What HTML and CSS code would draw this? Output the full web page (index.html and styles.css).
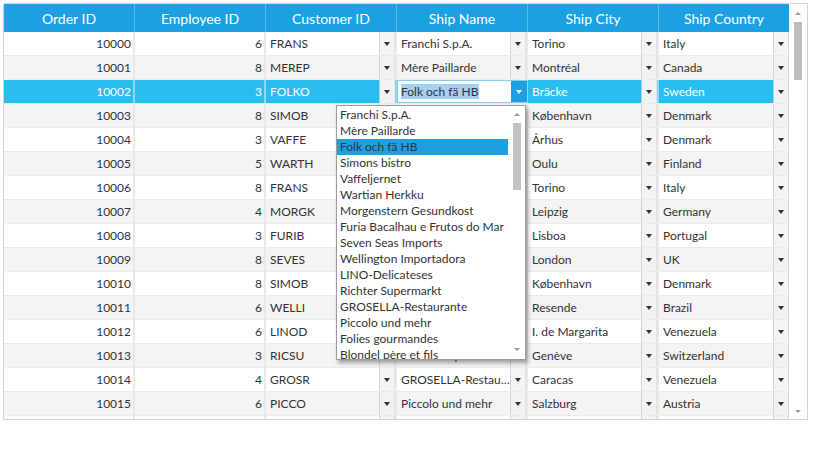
FILE: index.html
```html
<!DOCTYPE html>
<html>
<head>
<meta charset="utf-8">
<link rel="stylesheet" href="styles.css">
</head>
<body>
<div class="grid">
  <div class="main">
    <div class="header">
      <div class="hcell">Order ID</div>
      <div class="hcell">Employee ID</div>
      <div class="hcell">Customer ID</div>
      <div class="hcell">Ship Name</div>
      <div class="hcell">Ship City</div>
      <div class="hcell last">Ship Country</div>
    </div>
    <div class="body">
      <div class="row"><div class="cell num">10000</div><div class="cell num">6</div><div class="cell combo"><span class="txt">FRANS</span><span class="btn"></span></div><div class="cell combo"><span class="txt">Franchi S.p.A.</span><span class="btn"></span></div><div class="cell combo"><span class="txt">Torino</span><span class="btn"></span></div><div class="cell combo last"><span class="txt">Italy</span><span class="btn"></span></div></div>
      <div class="row alt"><div class="cell num">10001</div><div class="cell num">8</div><div class="cell combo"><span class="txt">MEREP</span><span class="btn"></span></div><div class="cell combo"><span class="txt">Mère Paillarde</span><span class="btn"></span></div><div class="cell combo"><span class="txt">Montréal</span><span class="btn"></span></div><div class="cell combo last"><span class="txt">Canada</span><span class="btn"></span></div></div>
      <div class="row sel"><div class="cell num">10002</div><div class="cell num">3</div><div class="cell combo"><span class="txt">FOLKO</span><span class="btn"></span></div><div class="cell combo editing"><span class="txt"><span class="hl">Folk och fä HB</span></span><span class="btn active"></span></div><div class="cell combo"><span class="txt">Bräcke</span><span class="btn"></span></div><div class="cell combo last"><span class="txt">Sweden</span><span class="btn"></span></div></div>
      <div class="row alt"><div class="cell num">10003</div><div class="cell num">8</div><div class="cell combo"><span class="txt">SIMOB</span><span class="btn"></span></div><div class="cell combo"><span class="txt">Simons bistro</span><span class="btn"></span></div><div class="cell combo"><span class="txt">København</span><span class="btn"></span></div><div class="cell combo last"><span class="txt">Denmark</span><span class="btn"></span></div></div>
      <div class="row"><div class="cell num">10004</div><div class="cell num">3</div><div class="cell combo"><span class="txt">VAFFE</span><span class="btn"></span></div><div class="cell combo"><span class="txt">Vaffeljernet</span><span class="btn"></span></div><div class="cell combo"><span class="txt">Århus</span><span class="btn"></span></div><div class="cell combo last"><span class="txt">Denmark</span><span class="btn"></span></div></div>
      <div class="row alt"><div class="cell num">10005</div><div class="cell num">5</div><div class="cell combo"><span class="txt">WARTH</span><span class="btn"></span></div><div class="cell combo"><span class="txt">Wartian Herkku</span><span class="btn"></span></div><div class="cell combo"><span class="txt">Oulu</span><span class="btn"></span></div><div class="cell combo last"><span class="txt">Finland</span><span class="btn"></span></div></div>
      <div class="row"><div class="cell num">10006</div><div class="cell num">8</div><div class="cell combo"><span class="txt">FRANS</span><span class="btn"></span></div><div class="cell combo"><span class="txt">Franchi S.p.A.</span><span class="btn"></span></div><div class="cell combo"><span class="txt">Torino</span><span class="btn"></span></div><div class="cell combo last"><span class="txt">Italy</span><span class="btn"></span></div></div>
      <div class="row alt"><div class="cell num">10007</div><div class="cell num">4</div><div class="cell combo"><span class="txt">MORGK</span><span class="btn"></span></div><div class="cell combo"><span class="txt">Morgenstern Gesundkost</span><span class="btn"></span></div><div class="cell combo"><span class="txt">Leipzig</span><span class="btn"></span></div><div class="cell combo last"><span class="txt">Germany</span><span class="btn"></span></div></div>
      <div class="row"><div class="cell num">10008</div><div class="cell num">3</div><div class="cell combo"><span class="txt">FURIB</span><span class="btn"></span></div><div class="cell combo"><span class="txt">Furia Bacalhau e Frutos do Mar</span><span class="btn"></span></div><div class="cell combo"><span class="txt">Lisboa</span><span class="btn"></span></div><div class="cell combo last"><span class="txt">Portugal</span><span class="btn"></span></div></div>
      <div class="row alt"><div class="cell num">10009</div><div class="cell num">8</div><div class="cell combo"><span class="txt">SEVES</span><span class="btn"></span></div><div class="cell combo"><span class="txt">Seven Seas Imports</span><span class="btn"></span></div><div class="cell combo"><span class="txt">London</span><span class="btn"></span></div><div class="cell combo last"><span class="txt">UK</span><span class="btn"></span></div></div>
      <div class="row"><div class="cell num">10010</div><div class="cell num">8</div><div class="cell combo"><span class="txt">SIMOB</span><span class="btn"></span></div><div class="cell combo"><span class="txt">Simons bistro</span><span class="btn"></span></div><div class="cell combo"><span class="txt">København</span><span class="btn"></span></div><div class="cell combo last"><span class="txt">Denmark</span><span class="btn"></span></div></div>
      <div class="row alt"><div class="cell num">10011</div><div class="cell num">6</div><div class="cell combo"><span class="txt">WELLI</span><span class="btn"></span></div><div class="cell combo"><span class="txt">Wellington Importadora</span><span class="btn"></span></div><div class="cell combo"><span class="txt">Resende</span><span class="btn"></span></div><div class="cell combo last"><span class="txt">Brazil</span><span class="btn"></span></div></div>
      <div class="row"><div class="cell num">10012</div><div class="cell num">6</div><div class="cell combo"><span class="txt">LINOD</span><span class="btn"></span></div><div class="cell combo"><span class="txt">LINO-Delicateses</span><span class="btn"></span></div><div class="cell combo"><span class="txt">I. de Margarita</span><span class="btn"></span></div><div class="cell combo last"><span class="txt">Venezuela</span><span class="btn"></span></div></div>
      <div class="row alt"><div class="cell num">10013</div><div class="cell num">3</div><div class="cell combo"><span class="txt">RICSU</span><span class="btn"></span></div><div class="cell combo"><span class="txt">Richter Supermarkt</span><span class="btn"></span></div><div class="cell combo"><span class="txt">Genève</span><span class="btn"></span></div><div class="cell combo last"><span class="txt">Switzerland</span><span class="btn"></span></div></div>
      <div class="row"><div class="cell num">10014</div><div class="cell num">4</div><div class="cell combo"><span class="txt">GROSR</span><span class="btn"></span></div><div class="cell combo"><span class="txt">GROSELLA-Restaurante</span><span class="btn"></span></div><div class="cell combo"><span class="txt">Caracas</span><span class="btn"></span></div><div class="cell combo last"><span class="txt">Venezuela</span><span class="btn"></span></div></div>
      <div class="row alt"><div class="cell num">10015</div><div class="cell num">6</div><div class="cell combo"><span class="txt">PICCO</span><span class="btn"></span></div><div class="cell combo"><span class="txt">Piccolo und mehr</span><span class="btn"></span></div><div class="cell combo"><span class="txt">Salzburg</span><span class="btn"></span></div><div class="cell combo last"><span class="txt">Austria</span><span class="btn"></span></div></div>
      <div class="row"><div class="cell num">10016</div><div class="cell num">2</div><div class="cell combo"><span class="txt">FOLIG</span><span class="btn"></span></div><div class="cell combo"><span class="txt">Folies gourmandes</span><span class="btn"></span></div><div class="cell combo"><span class="txt">Lille</span><span class="btn"></span></div><div class="cell combo last"><span class="txt">France</span><span class="btn"></span></div></div>
    </div>
  </div>
  <div class="vscroll">
    <span class="arrow up"></span>
    <div class="track"><div class="thumb"></div></div>
    <span class="arrow down"></span>
  </div>
  <div class="popup">
    <div class="list">
      <div class="item">Franchi S.p.A.</div>
      <div class="item">Mère Paillarde</div>
      <div class="item current">Folk och fä HB</div>
      <div class="item">Simons bistro</div>
      <div class="item">Vaffeljernet</div>
      <div class="item">Wartian Herkku</div>
      <div class="item">Morgenstern Gesundkost</div>
      <div class="item">Furia Bacalhau e Frutos do Mar</div>
      <div class="item">Seven Seas Imports</div>
      <div class="item">Wellington Importadora</div>
      <div class="item">LINO-Delicateses</div>
      <div class="item">Richter Supermarkt</div>
      <div class="item">GROSELLA-Restaurante</div>
      <div class="item">Piccolo und mehr</div>
      <div class="item">Folies gourmandes</div>
      <div class="item">Blondel père et fils</div>
    </div>
    <div class="pscroll">
      <span class="arrow up"></span>
      <div class="ptrack"><div class="pthumb"></div></div>
      <span class="arrow down"></span>
    </div>
  </div>
</div>
</body>
</html>
```

FILE: styles.css
```css
* { box-sizing: border-box; }
html, body { margin: 0; padding: 0; background: #ffffff; }
body {
  font-family: "Segoe UI", "Lato", "Open Sans", sans-serif;
  color: #333333;
  padding: 3px 0 0 3px;
}
.grid {
  position: relative;
  width: 805px;
  height: 417px;
  border: 1px solid #d6d6d6;
  display: flex;
  background: #ffffff;
}
.main {
  width: 785px;
  display: flex;
  flex-direction: column;
}
.header {
  height: 28px;
  background: #1ba1e2;
  display: grid;
  grid-template-columns: 131px 131px 131px 131px 131px 130px;
}
.hcell {
  color: #ffffff;
  font-size: 14px;
  display: flex;
  align-items: center;
  justify-content: center;
  border-right: 1px solid #55b9e9;
  padding-top: 1px;
}
.hcell.last { border-right: none; }
.body {
  flex: 1;
  overflow: hidden;
}
.row {
  height: 24px;
  display: grid;
  grid-template-columns: 131px 131px 131px 131px 131px 130px;
  border-bottom: 1px solid #ebebeb;
  background: #ffffff;
  font-size: 12px;
}
.row.alt { background: #f4f4f4; }
.row.sel { background: #29bdef; color: #ffffff; }
.cell {
  border-right: 2px solid #e9e9e9;
  display: flex;
  align-items: center;
  overflow: hidden;
  white-space: nowrap;
}
.row.sel .cell { border-right-color: #8fd6f3; }
.cell.last { border-right: none; }
.cell.num { justify-content: flex-end; padding-right: 2px; }
.cell.combo { padding-left: 4px; }
.txt {
  flex: 1;
  min-width: 0;
  overflow: hidden;
  text-overflow: ellipsis;
  white-space: nowrap;
}
.btn {
  width: 16px;
  height: 100%;
  background: #f4f4f4;
  border-left: 1px solid #d4d4d4;
  border-right: 1px solid #e2e2e2;
  position: relative;
  flex: none;
}
.cell.last .btn { border-right: 1px solid #d4d4d4; }
.row.alt .btn { background: #f2f2f2; }
.row.sel .btn { background: #f2f2f2; border-left-color: #9fd7f0; }
.btn::after {
  content: "";
  position: absolute;
  left: 4px;
  top: 10px;
  border-left: 3.5px solid transparent;
  border-right: 3.5px solid transparent;
  border-top: 4px solid #333333;
}
.cell.editing {
  background: #ffffff;
  border: 1px solid #86cdef;
  color: #333333;
  padding-left: 3px;
}
.hl {
  background: #a6cff0;
  padding: 1px 0;
}
.btn.active {
  background: #1ba1e2;
  border-left: none;
  border-right: none;
}
.row.sel .btn.active { background: #1ba1e2; }
.btn.active::after { border-top-color: #ffffff; left: 5px; top: 9px; }

.vscroll {
  width: 18px;
  display: flex;
  flex-direction: column;
  align-items: center;
  padding: 8px 0 6px;
}
.arrow {
  width: 0;
  height: 0;
  border-left: 3px solid transparent;
  border-right: 3px solid transparent;
  flex: none;
}
.arrow.up { border-bottom: 3px solid #9a9a9a; }
.arrow.down { border-top: 3px solid #9a9a9a; }
.track {
  flex: 1;
  width: 8px;
  padding-top: 7px;
}
.thumb {
  height: 58px;
  background: #bdbdbd;
}

.popup {
  position: absolute;
  left: 332px;
  top: 101px;
  width: 190px;
  height: 255px;
  background: #ffffff;
  border: 1px solid #9c9c9c;
  box-shadow: 2px 3px 4px rgba(0, 0, 0, 0.35);
  display: flex;
  overflow: hidden;
}
.list {
  width: 171px;
  padding-top: 1px;
}
.item {
  height: 16px;
  line-height: 16px;
  font-size: 12px;
  padding-left: 3px;
  white-space: nowrap;
  color: #333333;
}
.item.current { background: #1ba1e2; color: #333333; }
.pscroll {
  flex: 1;
  display: flex;
  flex-direction: column;
  align-items: center;
  padding: 7px 0 8px;
}
.ptrack {
  flex: 1;
  width: 8px;
  padding-top: 7px;
}
.pthumb {
  height: 67px;
  background: #c2c2c2;
}
```
